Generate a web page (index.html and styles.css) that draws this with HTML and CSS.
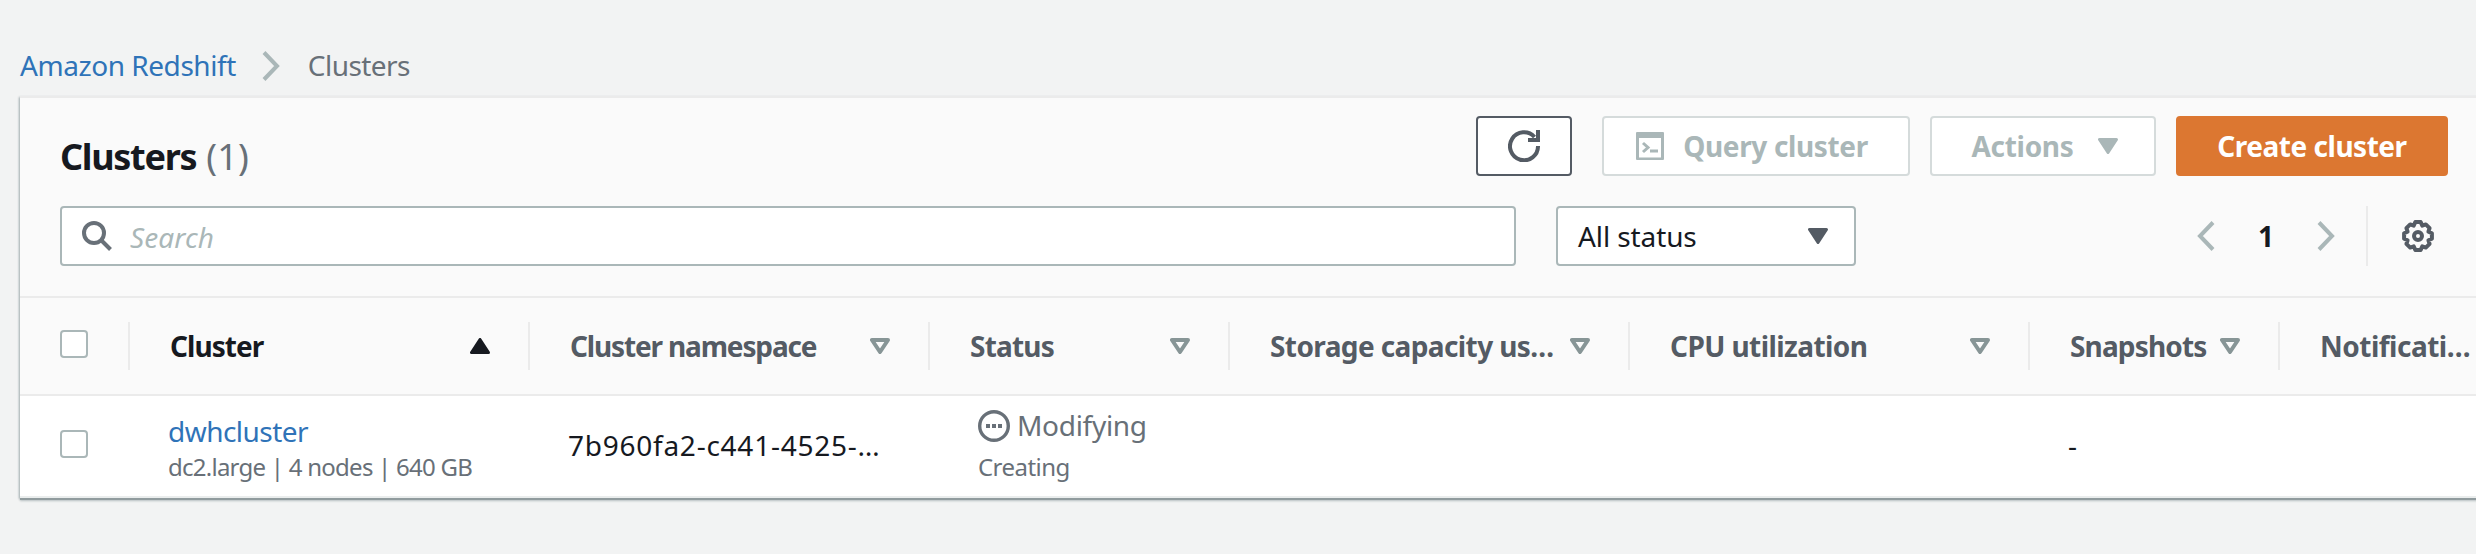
FILE: index.html
```html
<!DOCTYPE html>
<html lang="en">
<head>
<meta charset="utf-8">
<title>Amazon Redshift - Clusters</title>
<link rel="stylesheet" href="styles.css">
</head>
<body>
<nav class="breadcrumb">
  <a class="link t-crumb">Amazon Redshift</a>
  <svg class="crumb-sep" width="20" height="32" viewBox="0 0 20 32"><path d="M3 2.500 16 16 3 29.500"/></svg>
  <span class="t-current">Clusters</span>
</nav>
<main class="panel">
  <header class="panel-head">
    <div class="title-row">
      <h1><span class="t-title">Clusters</span><span class="count">(1)</span></h1>
      <div class="actions">
        <button class="btn btn-refresh" aria-label="Refresh"><svg width="32" height="32" viewBox="0 0 32 32"><path d="M30 16A14 14 0 1 1 26.500 7M30 0v10H20"/></svg></button>
        <button class="btn btn-query"><svg width="28" height="28" viewBox="0 0 28 28"><path class="solid" d="M1 0h26a1 1 0 0 1 1 1v26a1 1 0 0 1-1 1H1a1 1 0 0 1-1-1V1a1 1 0 0 1 1-1zM3 6v19.500h22V6z" fill-rule="evenodd"/><path d="m7 11 5 4.500L7 20M14 19h8"/></svg><span class="t-query">Query cluster</span></button>
        <button class="btn btn-actions"><span class="t-actions">Actions</span><svg class="caret" width="20" height="16" viewBox="0 0 20 16"><path d="M1.500 1.500h17L10 14.500z"/></svg></button>
        <button class="btn btn-create"><span class="t-create">Create cluster</span></button>
      </div>
    </div>
    <div class="filter-row">
      <label class="search"><svg width="30" height="30" viewBox="0 0 30 30"><circle cx="12" cy="12" r="10"/><path d="m19 19 9.500 9.500"/></svg><span class="t-search">Search</span></label>
      <div class="select"><span class="t-status">All status</span><svg class="caret" width="20" height="16" viewBox="0 0 20 16"><path d="M1.500 1.500h17L10 14.500z"/></svg></div>
      <div class="pager">
        <svg width="20" height="32" viewBox="0 0 20 32"><path d="M17 2.500 4 16l13 13.500"/></svg>
        <b>1</b>
        <svg width="20" height="32" viewBox="0 0 20 32"><path d="M3 2.500 16 16 3 29.500"/></svg>
      </div>
      <div class="settings"><svg width="32" height="32" viewBox="-16 -16 32 32"><path d="M-2.700-13.900H2.700L4.300-10.400 7.800-11.600 11.600-7.800 10.400-4.300 13.900-2.700V2.700L10.400 4.300 11.600 7.800 7.800 11.600 4.300 10.400 2.700 13.900H-2.700L-4.300 10.400-7.800 11.600-11.600 7.800-10.400 4.300-13.900 2.700V-2.700L-10.400-4.300-11.600-7.800-7.800-11.600-4.300-10.400z"/><circle r="4"/></svg></div>
    </div>
  </header>
  <div class="grid thead">
    <div class="check"><i class="box"></i></div>
    <div class="th sorted"><span class="t-h1">Cluster</span><svg class="sort" width="20" height="16" viewBox="0 0 20 16"><path d="M1.500 14.500h17L10 1.500z"/></svg></div>
    <div class="th"><span class="t-h2">Cluster namespace</span><svg class="sort" width="20" height="16" viewBox="0 0 20 16"><path d="M2 2h16l-8 12z"/></svg></div>
    <div class="th"><span class="t-h3">Status</span><svg class="sort" width="20" height="16" viewBox="0 0 20 16"><path d="M2 2h16l-8 12z"/></svg></div>
    <div class="th"><span class="t-h4">Storage capacity us…</span><svg class="sort" width="20" height="16" viewBox="0 0 20 16"><path d="M2 2h16l-8 12z"/></svg></div>
    <div class="th"><span class="t-h5">CPU utilization</span><svg class="sort" width="20" height="16" viewBox="0 0 20 16"><path d="M2 2h16l-8 12z"/></svg></div>
    <div class="th"><span class="t-h6">Snapshots</span><svg class="sort" width="20" height="16" viewBox="0 0 20 16"><path d="M2 2h16l-8 12z"/></svg></div>
    <div class="th last"><span class="t-h7">Notificati…</span></div>
  </div>
  <div class="grid row">
    <div class="check"><i class="box"></i></div>
    <div class="td name"><a class="link t-name">dwhcluster</a><small class="t-spec">dc2.large | 4 nodes | 640 GB</small></div>
    <div class="td"><span class="t-ns">7b960fa2-c441-4525-…</span></div>
    <div class="td state"><div class="state-line"><svg width="32" height="32" viewBox="0 0 32 32"><circle cx="16" cy="16" r="14.300"/><path d="M8 14h4v4H8zM14 14h4v4h-4zM20 14h4v4h-4z"/></svg><span class="t-mod">Modifying</span></div><small class="t-creating">Creating</small></div>
    <div class="td"></div>
    <div class="td"></div>
    <div class="td"><span>-</span></div>
    <div class="td"></div>
  </div>
</main>
</body>
</html>
```
FILE: styles.css
```css
* { box-sizing: border-box; }
body { margin: 0; min-height: 100vh; background: #f2f3f3; color: #16191f; font: 28px/40px "Noto Sans", "Open Sans", sans-serif; overflow: hidden; }
svg { display: block; flex: none; fill: none; stroke: currentColor; stroke-width: 4; }
.link { color: #2f73b8; }
.breadcrumb { display: flex; align-items: center; height: 96px; padding: 34px 0 0 20px; color: #687078; white-space: nowrap; }
.crumb-sep { color: #aab7b8; margin: 2px 27px 0 25px; }
.panel { margin-left: 20px; width: 2500px; border-top: 2px solid #ebebeb; box-shadow: 0 2px 0 0 #909b9e, 0 3px 2px 0 #b8c0c2, -1px 1px 2px 0 #a3adb0; background: #fff; }
.panel-head { height: 198px; padding: 18px 48px 0 40px; width: 2476px; background: #fafafa; }
.title-row, .filter-row, .actions { display: flex; align-items: center; }
.title-row { height: 60px; justify-content: space-between; }
h1 { margin: 22px 0 0; font-size: 36px; line-height: 40px; }
.count { font-weight: 400; color: #687078; margin-left: 10px; }
.btn { display: flex; align-items: center; justify-content: center; height: 60px; padding: 0; border: 2px solid #d5dbdb; border-radius: 4px; background: #fff; color: #aab7b8; font: 700 28px/40px "Noto Sans", sans-serif; }
.btn span, .select span, .th span, .pager b { padding-bottom: 1px; }
.btn-refresh { width: 96px; border-color: #545b64; color: #545b64; margin-right: 30px; }
.btn-query { width: 308px; padding-right: 8px; }
.btn-query svg { margin-right: 19px; stroke-width: 3; }
.btn-query .solid { fill: currentColor; stroke: none; }
.btn-actions { width: 226px; margin: 0 20px; padding-left: 3px; }
.btn-actions svg { margin-left: 24px; }
.btn-create { width: 272px; border-color: #dc7731; background: #dc7731; color: #fff; }
.caret path, .sorted .sort path { fill: currentColor; stroke-width: 3; stroke-linejoin: round; }
.filter-row { margin-top: 30px; height: 60px; }
.search, .select { display: flex; align-items: center; height: 60px; border: 2px solid #aab7b8; border-radius: 4px; background: #fff; }
.search { width: 1456px; padding-left: 20px; font-style: italic; color: #aab7b8; }
.search span { padding-top: 2px; }
.search svg { color: #687078; margin-right: 18px; }
.select { width: 300px; margin-left: 40px; padding: 0 26px 0 20px; justify-content: space-between; }
.select svg { color: #545b64; }
.pager { display: flex; align-items: center; justify-content: space-between; width: 140px; margin-left: auto; color: #aab7b8; }
.pager b { color: #16191f; }
.settings { display: flex; align-items: center; height: 60px; margin-left: 30px; padding: 0 14px 0 34px; border-left: 2px solid #ebebeb; color: #545b64; }
.settings svg { stroke-width: 4; stroke-linejoin: round; }
.grid { display: grid; grid-template-columns: 110px 400px 400px 300px 400px 400px 250px 240px; }
.thead { height: 100px; border-top: 2px solid #ebebeb; border-bottom: 2px solid #ebebeb; background: #fafafa; color: #545b64; font-weight: 700; align-items: center; }
.check { display: flex; align-items: center; height: 48px; padding: 0 0 4px 40px; border-right: 2px solid #ebebeb; }
.box { width: 28px; height: 28px; border: 2px solid #aab7b8; border-radius: 4px; background: #fff; }
.th { display: flex; align-items: center; justify-content: space-between; height: 48px; padding: 0 38px 0 40px; border-right: 2px solid #ebebeb; white-space: nowrap; }
.th.last { border: 0; }
.sorted { color: #16191f; }
.sort path { stroke-width: 4; stroke-linejoin: round; }
.th:not(.sorted) .sort { color: #879596; }
.row { height: 102px; border-bottom: 2px solid #eaeded; }
.row .check { border: 0; height: 96px; padding-bottom: 0; }
.td { display: flex; align-items: center; padding: 0 0 2px 38px; white-space: nowrap; }
.name { display: block; padding-top: 15px; }
.name a, .name small { display: block; }
small { font-size: 24px; line-height: 32px; color: #687078; }
.state { display: block; padding: 9px 0 0 48px; color: #687078; }
.state-line { display: flex; align-items: center; gap: 7px; height: 40px; }
.state-line svg { stroke-width: 3.400; margin-top: 2px; }
.state-line path { fill: currentColor; stroke: none; }
.state small { display: block; margin-top: 6px; }

.t-crumb { letter-spacing: -.45px; }
.t-current { letter-spacing: -.55px; }
.t-title { letter-spacing: -1.300px; }
.count { letter-spacing: .2px; }
.t-query { letter-spacing: -.36px; }
.t-actions { letter-spacing: -.3px; }
.t-create { letter-spacing: -.48px; }
.t-search { letter-spacing: .1px; }
.t-status { letter-spacing: -.1px; }
.t-h1 { letter-spacing: -.95px; }
.t-h2 { letter-spacing: -1.150px; }
.t-h3 { letter-spacing: -.8px; }
.t-h4 { letter-spacing: -.6px; }
.t-h5 { letter-spacing: -.58px; }
.t-h6 { letter-spacing: -.85px; }
.t-h7 { letter-spacing: -.5px; }
.t-name { letter-spacing: -.54px; }
.t-spec { letter-spacing: -.75px; }
.t-ns { letter-spacing: .75px; }
.t-mod { letter-spacing: -.3px; }
.t-creating { letter-spacing: -.55px; }
```
